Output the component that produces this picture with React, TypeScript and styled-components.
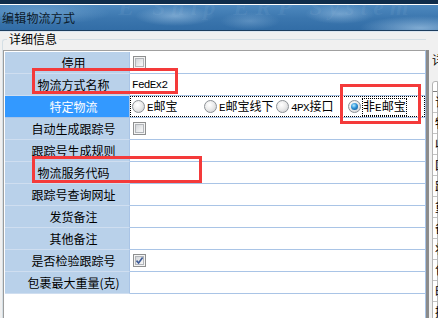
import React from 'react'
import styled, { createGlobalStyle, css } from 'styled-components'

const GlobalStyle = createGlobalStyle`
  html, body {
    margin: 0;
    padding: 0;
  }
  body {
    width: 438px;
    height: 318px;
    overflow: hidden;
    background: #f0f0f0;
    font-family: 'Noto Sans CJK SC', 'Liberation Sans', sans-serif;
    font-size: 12px;
    color: #000;
  }
`

const Window = styled.div`
  position: relative;
  width: 438px;
  height: 318px;
  overflow: hidden;
  display: flex;
  flex-direction: column;
`

const Header = styled.div`
  border-bottom: 1px solid #dce6f0;
`

const TitleBar = styled.div`
  position: relative;
  overflow: hidden;
  height: 26px;
  border-top: 4px solid #0f2c4a;
  border-bottom: 1px solid #1d3d5e;
  box-shadow: inset 0 1px 0 #ffffff;
  background:
    radial-gradient(ellipse 70px 12px at 40px 9px, rgba(170, 210, 240, 0.35), transparent),
    radial-gradient(ellipse 40px 10px at 175px 12px, rgba(190, 220, 245, 0.45), transparent),
    radial-gradient(ellipse 30px 9px at 250px 17px, rgba(170, 205, 235, 0.3), transparent),
    radial-gradient(ellipse 35px 10px at 340px 10px, rgba(190, 220, 245, 0.4), transparent),
    radial-gradient(ellipse 60px 12px at 420px 24px, rgba(190, 220, 245, 0.55), transparent),
    linear-gradient(180deg, #4f8ac0 0%, #3b76ae 55%, #326da6 100%);
`

const Title = styled.div`
  position: relative;
  padding: 1px 0 0 2px;
  line-height: 26px;
  font-size: 12px;
  color: #0b1a2a;
  letter-spacing: 0.2px;
`

const Watermark = styled.span`
  position: absolute;
  left: 118px;
  top: -10px;
  font-family: 'Liberation Serif', serif;
  font-style: italic;
  font-weight: bold;
  font-size: 24px;
  letter-spacing: 6px;
  color: rgba(205, 228, 248, 0.07);
  white-space: nowrap;
`

const Main = styled.div`
  flex: 1;
  display: flex;
  min-height: 0;
`

const LeftPane = styled.div`
  width: 426px;
  flex: none;
  display: flex;
  flex-direction: column;
  overflow: hidden;
`

const Group = styled.fieldset`
  flex: 1;
  min-width: 0;
  margin: 0 0 0 2px;
  padding: 0;
  border: 1px solid #d5dfe5;
  border-right: none;
  border-bottom: none;
  border-radius: 3px 0 0 0;
  display: flex;
  flex-direction: column;
`

const Legend = styled.legend`
  margin-left: 4px;
  padding: 0 2px;
  line-height: 14px;
  font-size: 12px;
`

const Grid = styled.div`
  flex: 1;
  margin-top: 4px;
  padding: 1px 0 0 1px;
  background: #ffffff;
  border-top: 1px solid #a0a0a0;
  border-left: 1px solid #9c9c9c;
  border-right: 1px solid #a9c4e6;
`

const Row = styled.div`
  display: grid;
  grid-template-columns: 125px 1fr;
  height: 22px;
`

const LabelCell = styled.div<{ $active?: boolean }>`
  box-sizing: border-box;
  padding-left: 13px;
  text-align: center;
  line-height: 21px;
  white-space: nowrap;
  background: #b9d1ea;
  border-right: 1px solid #a9c4e6;
  border-bottom: 1px solid #cfdef0;
  ${p =>
    p.$active &&
    css`
      background: #3399ff;
      color: #ffffff;
      border-bottom-color: #a9c4e6;
    `}
`

const ValueCell = styled.div`
  box-sizing: border-box;
  display: flex;
  align-items: center;
  padding-left: 2px;
  border-bottom: 1px solid #a9c4e6;
  min-width: 0;
`

const Latin = styled.span`
  font-family: 'Liberation Mono', monospace;
  font-size: 11px;
  letter-spacing: -0.6px;
  margin-right: 0.6px;
`

const TextValue = styled.span`
  font-family: 'Liberation Mono', monospace;
  font-size: 11px;
  letter-spacing: -0.7px;
  line-height: 12px;
`

const Checkbox = styled.span<{ $checked?: boolean }>`
  position: relative;
  box-sizing: border-box;
  width: 13px;
  height: 13px;
  margin-left: 1px;
  border: 1px solid #8e8f8f;
  background: #f4f4f4;
  &::before {
    content: '';
    position: absolute;
    inset: 1px;
    border: 1px solid #b2b5b9;
    background: linear-gradient(135deg, #d3d5d8 0%, #eeeff0 70%, #f6f6f6 100%);
  }
  svg {
    position: absolute;
    left: 1px;
    top: 1px;
  }
`

const RadioGroup = styled.div`
  box-sizing: border-box;
  margin-left: -2px;
  width: calc(100% + 2px);
  height: 21px;
  border: 1px dotted #000;
  padding-left: 1px;
  display: grid;
  grid-template-columns: repeat(4, 72px);
  align-items: center;
`

const RadioItem = styled.label`
  display: flex;
  align-items: center;
  white-space: nowrap;
`

const Radio = styled.span<{ $checked?: boolean }>`
  position: relative;
  box-sizing: border-box;
  flex: none;
  width: 13px;
  height: 13px;
  border-radius: 50%;
  border: 1px solid #8d9297;
  background: radial-gradient(circle at 40% 35%, #ffffff 0, #ececec 45%, #c6c8cb 100%);
  ${p =>
    p.$checked &&
    css`
      &::after {
        content: '';
        position: absolute;
        inset: 2px;
        border-radius: 50%;
        background: radial-gradient(circle at 40% 35%, #b8ecff 0, #2c92d8 45%, #0b477f 100%);
      }
    `}
`

const RadioText = styled.span<{ $focused?: boolean }>`
  margin-left: 1px;
  border: 1px dotted ${p => (p.$focused ? '#000' : 'transparent')};
  line-height: 13px;
`

const RightPane = styled.div`
  flex: 1;
  min-width: 0;
  margin-top: 18px;
  border-left: 3px solid #8b8b8b;
  padding-left: 3px;
  display: flex;
  flex-direction: column;
  overflow: hidden;
`

const PaneLabel = styled.div`
  margin-top: 3px;
  line-height: 14px;
  white-space: nowrap;
`

const SubBox = styled.div`
  flex: 1;
  margin-top: 14px;
  background: #ffffff;
  border: 1px solid #b4b4b4;
  border-radius: 3px 0 0 0;
`

const SubHeader = styled.div`
  height: 9px;
  border-bottom: 1px solid #7c7c7c;
`

const SubRow = styled.div`
  height: 20px;
  line-height: 20px;
  padding-left: 2px;
  border-bottom: 1px solid #c4c4c4;
  white-space: nowrap;
`

const Callout = styled.div<{ $x: number; $y: number; $w: number; $h: number }>`
  position: absolute;
  box-sizing: border-box;
  left: ${p => p.$x}px;
  top: ${p => p.$y}px;
  width: ${p => p.$w}px;
  height: ${p => p.$h}px;
  border: 3px solid #f43a3a;
  pointer-events: none;
`

const CheckMark = () => (
  <svg width="9" height="9" viewBox="0 0 9 9">
    <path d="M1.5 4.6 L3.6 7 L7.6 1.6" fill="none" stroke="#3d5a96" strokeWidth="1.6" />
  </svg>
)

type Field = {
  label: string
  kind?: 'check' | 'checked' | 'text' | 'radios'
  value?: string
  active?: boolean
}

const fields: Field[] = [
  { label: '停用', kind: 'check' },
  { label: '物流方式名称', kind: 'text', value: 'FedEx2' },
  { label: '特定物流', kind: 'radios', active: true },
  { label: '自动生成跟踪号', kind: 'check' },
  { label: '跟踪号生成规则' },
  { label: '物流服务代码' },
  { label: '跟踪号查询网址' },
  { label: '发货备注' },
  { label: '其他备注' },
  { label: '是否检验跟踪号', kind: 'checked' },
  { label: '包裹最大重量(克)' },
]

const radios = [
  { latin: 'E', text: '邮宝' },
  { latin: 'E', text: '邮宝线下' },
  { latin: '4PX', text: '接口' },
  { pre: '非', latin: 'E', text: '邮宝', checked: true },
]

const sideRows = ['订单编号', '物流方式', '收件人', '国家', '跟踪号', '重量', '备注', '状态', '包裹', '时间', '操作']

const renderValue = (f: Field) => {
  switch (f.kind) {
    case 'check':
      return <Checkbox />
    case 'checked':
      return (
        <Checkbox $checked>
          <CheckMark />
        </Checkbox>
      )
    case 'text':
      return <TextValue>{f.value}</TextValue>
    case 'radios':
      return (
        <RadioGroup>
          {radios.map((r, i) => (
            <RadioItem key={i}>
              <Radio $checked={r.checked} />
              <RadioText $focused={r.checked}>
                {r.pre}
                <Latin>{r.latin}</Latin>
                {r.text}
              </RadioText>
            </RadioItem>
          ))}
        </RadioGroup>
      )
    default:
      return null
  }
}

export default function App() {
  return (
    <Window>
      <GlobalStyle />
      <Header>
        <TitleBar>
          <Watermark>E Ship ERP System</Watermark>
          <Title>编辑物流方式</Title>
        </TitleBar>
      </Header>
      <Main>
        <LeftPane>
          <Group>
            <Legend>详细信息</Legend>
            <Grid>
              {fields.map(f => (
                <Row key={f.label}>
                  <LabelCell $active={f.active}>{f.label}</LabelCell>
                  <ValueCell>{renderValue(f)}</ValueCell>
                </Row>
              ))}
            </Grid>
          </Group>
        </LeftPane>
        <RightPane>
          <PaneLabel>详细信息</PaneLabel>
          <SubBox>
            <SubHeader />
            {sideRows.map(s => (
              <SubRow key={s}>{s}</SubRow>
            ))}
          </SubBox>
        </RightPane>
      </Main>
      <Callout $x={32} $y={68} $w={146} $h={26} />
      <Callout $x={340} $y={84} $w={81} $h={40} />
      <Callout $x={32} $y={156} $w={170} $h={27} />
    </Window>
  )
}
